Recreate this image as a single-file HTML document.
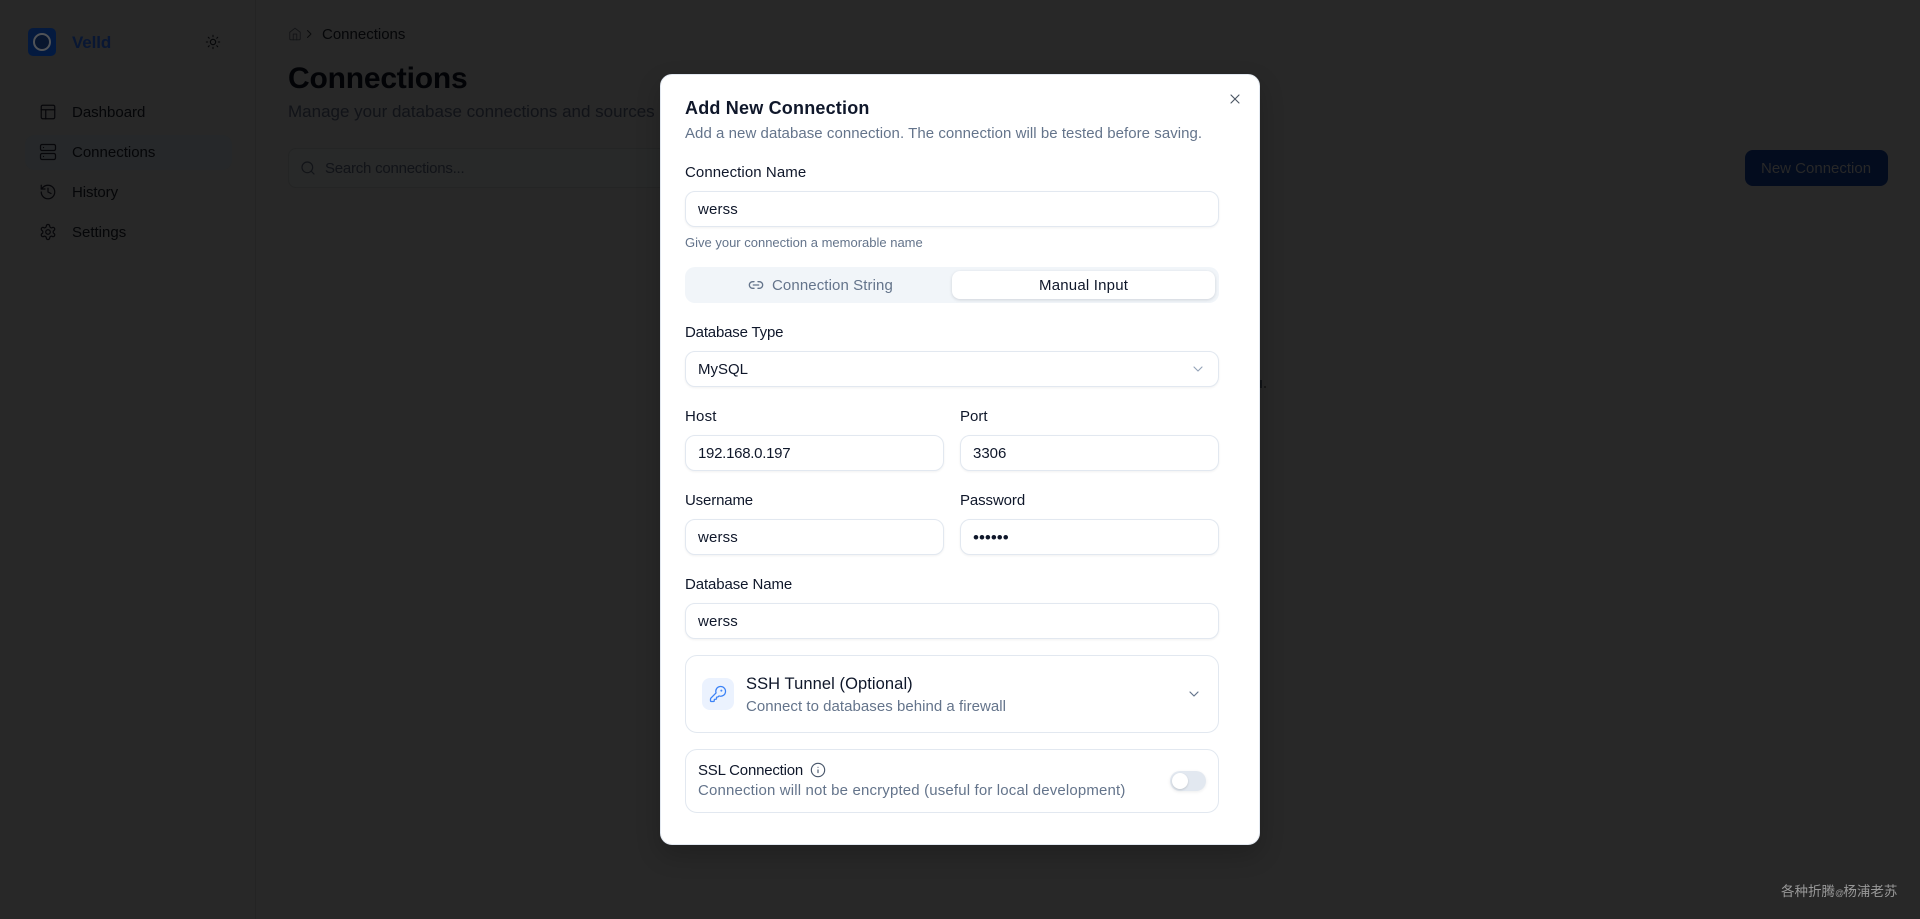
<!DOCTYPE html>
<html lang="en"><head><meta charset="utf-8"><title>Connections</title>
<style>
*{box-sizing:border-box;margin:0;padding:0}
html,body{width:1920px;height:919px;overflow:hidden;background:#282828}
body{position:relative;font-family:"Liberation Sans","Noto Sans CJK SC",sans-serif;font-size:15px}
.t{position:absolute;white-space:nowrap;line-height:20px;height:20px}
svg{position:absolute;fill:none;stroke:currentColor;stroke-width:2;stroke-linecap:round;stroke-linejoin:round;display:block}
.d{color:#050608}
.bx{position:absolute}
#modal{position:absolute;left:660px;top:74px;width:600px;height:771px;background:#fff;border:1px solid #e2e8f0;border-radius:12px;box-shadow:0 10px 25px rgba(0,0,0,.2)}
.l{color:#0f172a}
.m{color:#64748b}
.i{position:absolute;height:36px;background:#fff;border:1px solid #e2e8f0;border-radius:10px;box-shadow:0 1px 2px rgba(15,23,42,.06)}
</style></head><body>
<!-- background page -->
<div class="bx" style="left:255px;top:0;width:1px;height:919px;background:#242424"></div>
<div class="bx" style="left:28px;top:28px;width:28px;height:28px;border-radius:5px;background:linear-gradient(135deg,#061a3c,#021a42)"></div>
<div class="bx" style="left:33px;top:33px;width:18px;height:18px;border-radius:50%;border:2px solid #505357;background:#08162e"></div>
<div class="t" style="left:72px;top:33px;font-size:17px;font-weight:700;letter-spacing:-.1px;color:#091733">Velld</div>
<svg style="left:205px;top:34px;color:#050608;stroke-width:1.6" width="16" height="16" viewBox="0 0 24 24"><circle cx="12" cy="12" r="4"/><path d="M12 2v2M12 20v2m-7.07-17.07 1.41 1.41m11.32 11.32 1.41 1.41M2 12h2M20 12h2M6.34 17.66l-1.41 1.41M19.07 4.93l-1.41 1.41"/></svg>

<div class="bx" style="left:25px;top:135px;width:207px;height:35px;border-radius:10px;background:#26282a"></div>
<svg style="left:39px;top:103px;color:#07070a;stroke-width:1.6" width="18" height="18" viewBox="0 0 24 24"><rect x="3" y="3" width="18" height="18" rx="2"/><path d="M3 9h18M9 21V9"/></svg>
<div class="t d" style="left:72px;top:103px">Dashboard</div>
<svg style="left:39px;top:143px;color:#07070a;stroke-width:1.6" width="18" height="18" viewBox="0 0 24 24"><rect x="2" y="2" width="20" height="8" rx="2"/><rect x="2" y="14" width="20" height="8" rx="2"/><path d="M6 6h.01M6 18h.01"/></svg>
<div class="t d" style="left:72px;top:143px">Connections</div>
<svg style="left:39px;top:183px;color:#07070a;stroke-width:1.6" width="18" height="18" viewBox="0 0 24 24"><path d="M3 12a9 9 0 1 0 9-9 9.75 9.75 0 0 0-6.74 2.74L3 8"/><path d="M3 3v5h5"/><path d="M12 7v5l4 2"/></svg>
<div class="t d" style="left:72px;top:183px;letter-spacing:-.1px">History</div>
<svg style="left:39px;top:223px;color:#07070a;stroke-width:1.6" width="18" height="18" viewBox="0 0 24 24"><path d="M12.22 2h-.44a2 2 0 0 0-2 2v.18a2 2 0 0 1-1 1.73l-.43.25a2 2 0 0 1-2 0l-.15-.08a2 2 0 0 0-2.73.73l-.22.38a2 2 0 0 0 .73 2.73l.15.1a2 2 0 0 1 1 1.72v.51a2 2 0 0 1-1 1.74l-.15.09a2 2 0 0 0-.73 2.73l.22.38a2 2 0 0 0 2.73.73l.15-.08a2 2 0 0 1 2 0l.43.25a2 2 0 0 1 1 1.73V20a2 2 0 0 0 2 2h.44a2 2 0 0 0 2-2v-.18a2 2 0 0 1 1-1.73l.43-.25a2 2 0 0 1 2 0l.15.08a2 2 0 0 0 2.73-.73l.22-.39a2 2 0 0 0-.73-2.73l-.15-.08a2 2 0 0 1-1-1.74v-.5a2 2 0 0 1 1-1.74l.15-.09a2 2 0 0 0 .73-2.73l-.22-.38a2 2 0 0 0-2.73-.73l-.15.08a2 2 0 0 1-2 0l-.43-.25a2 2 0 0 1-1-1.73V4a2 2 0 0 0-2-2z"/><circle cx="12" cy="12" r="3"/></svg>
<div class="t d" style="left:72px;top:223px">Settings</div>

<svg style="left:288px;top:27px;color:#131416;stroke-width:1.5" width="14" height="14" viewBox="0 0 24 24"><path d="m3 9 9-7 9 7v11a2 2 0 0 1-2 2H5a2 2 0 0 1-2-2z"/><path d="M9 22V12h6v10"/></svg>
<svg style="left:303px;top:28px;color:#0a0b0d;stroke-width:1.8" width="12" height="12" viewBox="0 0 24 24"><path d="m9 5 7 7-7 7"/></svg>
<div class="t d" style="left:322px;top:25px">Connections</div>
<div class="t" style="left:288px;top:59px;line-height:40px;height:40px;font-size:30px;font-weight:700;letter-spacing:-.2px;color:#020306">Connections</div>
<div class="t" style="left:288px;top:102px;font-size:17px;color:#111318">Manage your database connections and sources</div>
<div class="bx" style="left:288px;top:148px;width:700px;height:40px;border:1px solid #242525;border-radius:8px;background:#282929"></div>
<svg style="left:300px;top:160px;color:#121418;stroke-width:1.7" width="16" height="16" viewBox="0 0 24 24"><circle cx="11" cy="11" r="8"/><path d="m21 21-4.3-4.3"/></svg>
<div class="t" style="left:325px;top:159px;color:#111318;letter-spacing:-.23px">Search connections...</div>
<div class="bx" style="left:1745px;top:150px;width:143px;height:36px;border-radius:8px;background:#030c1e"></div>
<div class="t" style="left:1761px;top:159px;color:#282828">New Connection</div>
<div class="bx" style="left:1260px;top:380px;width:2px;height:8px;background:#121418"></div>
<div class="bx" style="left:1264px;top:386px;width:2px;height:2px;background:#181818"></div>
<div class="t" style="left:1781px;top:882px;font-size:13.5px;color:#999">各种折腾<span style="font-size:9px;letter-spacing:-.8px">@</span>杨浦老苏</div>

<!-- modal -->
<div id="modal"></div>
<div class="t l" style="left:685px;top:98px;font-size:18px;font-weight:700;letter-spacing:.2px">Add New Connection</div>
<svg style="left:1227px;top:91px;color:#4b5563;stroke-width:1.7" width="16" height="16" viewBox="0 0 24 24"><path d="M18 6 6 18M6 6l12 12"/></svg>
<div class="t m" style="left:685px;top:124px;letter-spacing:.05px">Add a new database connection. The connection will be tested before saving.</div>

<div class="t l" style="left:685px;top:163px;letter-spacing:.08px">Connection Name</div>
<div class="i" style="left:685px;top:191px;width:534px"></div>
<div class="t l" style="left:698px;top:200px;letter-spacing:.15px">werss</div>
<div class="t m" style="left:685px;top:233px;font-size:13px">Give your connection a memorable name</div>

<div class="bx" style="left:685px;top:267px;width:534px;height:36px;border-radius:10px;background:#f1f5f9"></div>
<div class="bx" style="left:952px;top:271px;width:263px;height:28px;border-radius:8px;background:#fff;box-shadow:0 1px 3px rgba(15,23,42,.15)"></div>
<svg style="left:748px;top:277px;color:#64748b" width="16" height="16" viewBox="0 0 24 24"><path d="M9 17H7A5 5 0 0 1 7 7h2"/><path d="M15 7h2a5 5 0 1 1 0 10h-2"/><path d="M8 12h8"/></svg>
<div class="t m" style="left:772px;top:276px;letter-spacing:.1px">Connection String</div>
<div class="t l" style="left:1039px;top:276px;letter-spacing:.2px">Manual Input</div>

<div class="t l" style="left:685px;top:323px;letter-spacing:-.18px">Database Type</div>
<div class="i" style="left:685px;top:351px;width:534px"></div>
<div class="t l" style="left:698px;top:360px;letter-spacing:0">MySQL</div>
<svg style="left:1190px;top:361px;color:#94a3b8;stroke-width:1.7" width="16" height="16" viewBox="0 0 24 24"><path d="m6 9 6 6 6-6"/></svg>

<div class="t l" style="left:685px;top:407px;letter-spacing:.2px">Host</div>
<div class="t l" style="left:960px;top:407px">Port</div>
<div class="i" style="left:685px;top:435px;width:259px"></div>
<div class="i" style="left:960px;top:435px;width:259px"></div>
<div class="t l" style="left:698px;top:444px;letter-spacing:-.28px">192.168.0.197</div>
<div class="t l" style="left:973px;top:444px">3306</div>

<div class="t l" style="left:685px;top:491px;letter-spacing:-.15px">Username</div>
<div class="t l" style="left:960px;top:491px;letter-spacing:-.1px">Password</div>
<div class="i" style="left:685px;top:519px;width:259px"></div>
<div class="i" style="left:960px;top:519px;width:259px"></div>
<div class="t l" style="left:698px;top:528px;letter-spacing:.15px">werss</div>
<div class="t l" style="left:973px;top:528px;font-size:17px">••••••</div>

<div class="t l" style="left:685px;top:575px;letter-spacing:-.1px">Database Name</div>
<div class="i" style="left:685px;top:603px;width:534px"></div>
<div class="t l" style="left:698px;top:612px;letter-spacing:.15px">werss</div>

<div class="bx" style="left:685px;top:655px;width:534px;height:78px;border:1px solid #e2e8f0;border-radius:12px;background:#fff"></div>
<div class="bx" style="left:702px;top:678px;width:32px;height:32px;border-radius:8px;background:#ebf2fe"></div>
<svg style="left:709px;top:685px;color:#3b82f6;stroke-width:1.7" width="18" height="18" viewBox="0 0 24 24"><path d="M2.586 17.414A2 2 0 0 0 2 18.828V21a1 1 0 0 0 1 1h3a1 1 0 0 0 1-1v-1a1 1 0 0 1 1-1h1a1 1 0 0 0 1-1v-1a1 1 0 0 1 1-1h.172a2 2 0 0 0 1.414-.586l.814-.814a6.5 6.5 0 1 0-4-4z"/><circle cx="16.5" cy="7.5" r=".5" fill="currentColor"/></svg>
<div class="t l" style="left:746px;top:674px;font-size:16.5px;letter-spacing:.08px">SSH Tunnel (Optional)</div>
<div class="t m" style="left:746px;top:697px;letter-spacing:.04px">Connect to databases behind a firewall</div>
<svg style="left:1186px;top:686px;color:#64748b;stroke-width:1.8" width="16" height="16" viewBox="0 0 24 24"><path d="m6 9 6 6 6-6"/></svg>

<div class="bx" style="left:685px;top:749px;width:534px;height:64px;border:1px solid #e2e8f0;border-radius:12px;background:#fff"></div>
<div class="t l" style="left:698px;top:761px;letter-spacing:-.2px">SSL Connection</div>
<svg style="left:810px;top:762px;color:#475569;stroke-width:1.7" width="16" height="16" viewBox="0 0 24 24"><circle cx="12" cy="12" r="10"/><path d="M12 16v-4M12 8h.01"/></svg>
<div class="t m" style="left:698px;top:781px;letter-spacing:.155px">Connection will not be encrypted (useful for local development)</div>
<div class="bx" style="left:1170px;top:771px;width:36px;height:20px;border-radius:10px;background:#e2e8f0;box-shadow:0 1px 3px rgba(15,23,42,.08)"></div>
<div class="bx" style="left:1172px;top:773px;width:16px;height:16px;border-radius:50%;background:#fff;box-shadow:0 1px 2px rgba(0,0,0,.15)"></div>
</body></html>
